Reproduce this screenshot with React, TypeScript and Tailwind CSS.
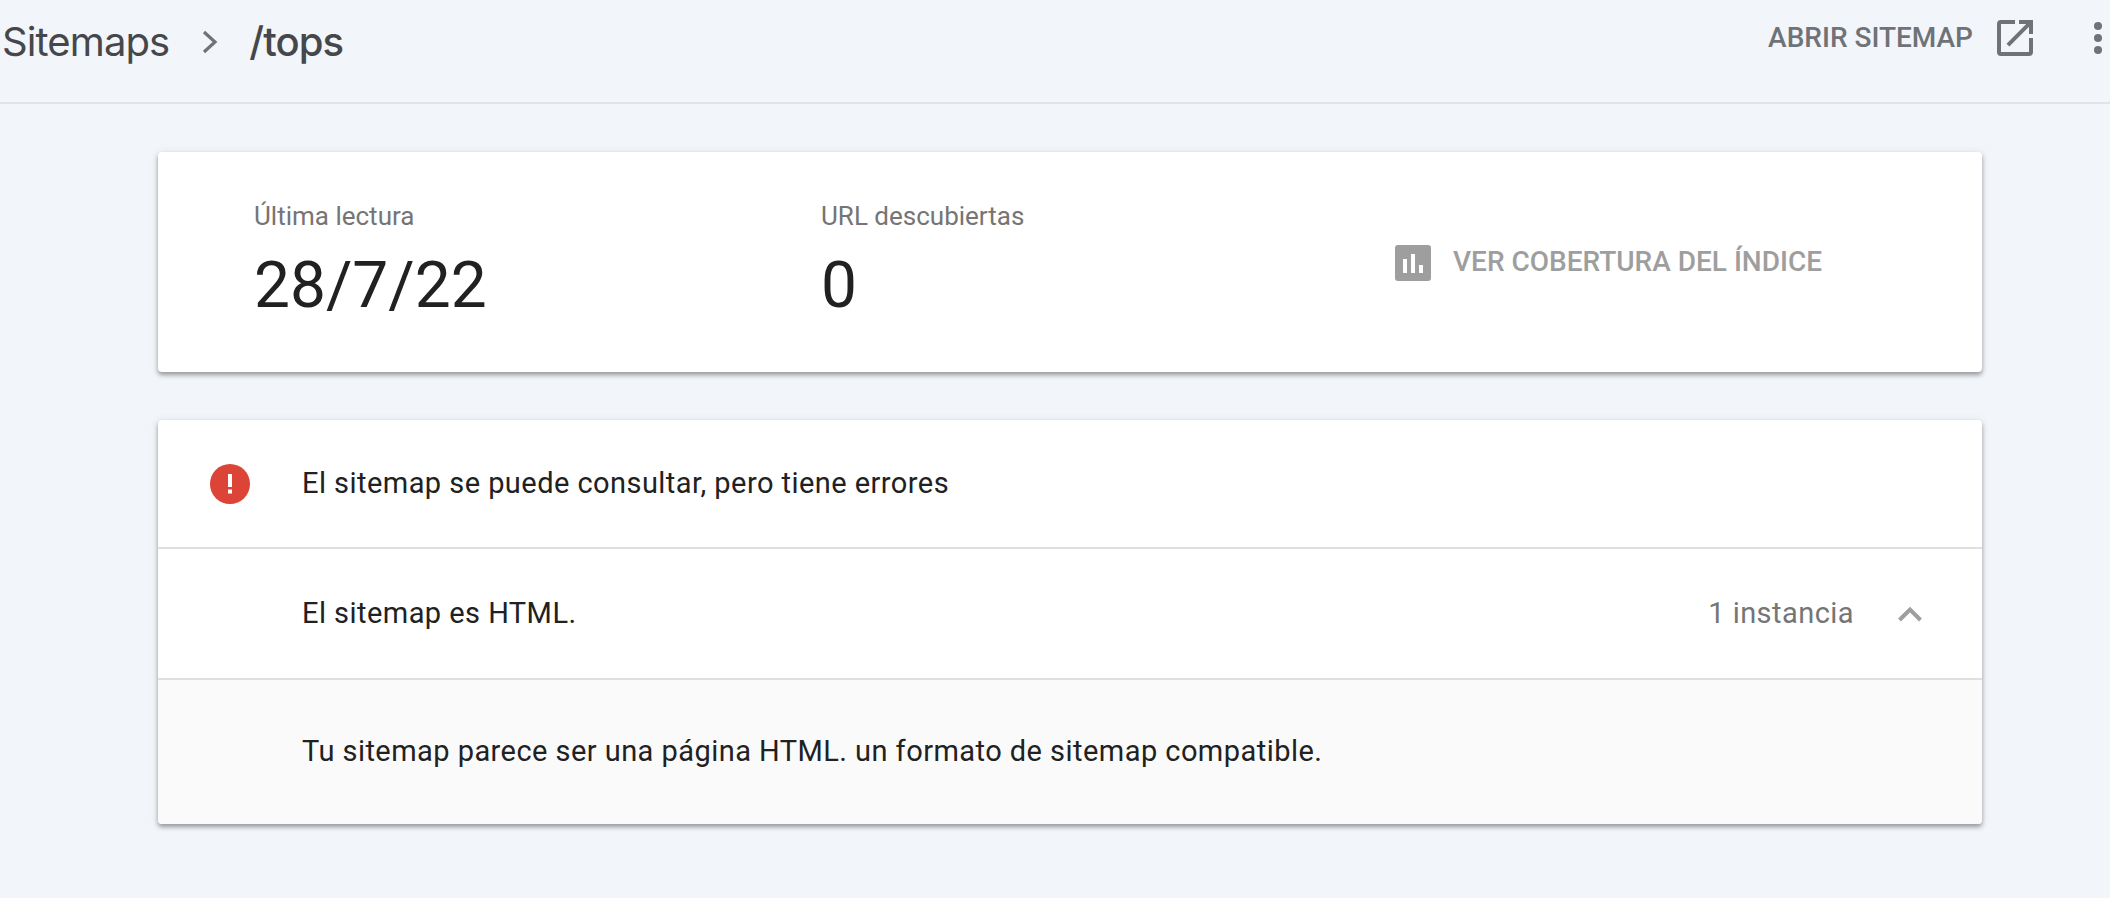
export default function App() {
  return (
    <div className="w-[2110px] h-[898px] bg-[#f2f5fa] overflow-hidden font-['Roboto',sans-serif]">
      <header className="h-[104px] border-b-2 border-[#e0e3e7] flex items-center pl-[2px] pb-[18px]">
        <span className="text-[40px] text-[#45474a] font-['Inter',sans-serif] tracking-[-0.9px]">Sitemaps</span>
        <svg className="w-[24px] h-[24px] ml-[29px]" viewBox="0 0 24 24" fill="none" stroke="#6f7276" strokeWidth="3.2"><path d="M6 2l11 10-11 10" /></svg>
        <span className="ml-[27px] text-[40px] font-medium text-[#45474a] font-['Inter',sans-serif] tracking-[-0.9px]">/tops</span>
        <div className="ml-auto flex items-center text-[#6f7276] -mt-[8px]">
          <span className="text-[28px] font-medium">ABRIR SITEMAP</span>
          <svg className="w-[48px] h-[48px] ml-[18px]" viewBox="0 0 24 24" fill="#6f7276"><path d="M19 19H5V5h7V3H5a2 2 0 0 0-2 2v14a2 2 0 0 0 2 2h14a2 2 0 0 0 2-2v-7h-2v7zM14 3v2h3.59l-9.83 9.83 1.41 1.41L19 6.41V10h2V3h-7z" /></svg>
          <svg className="w-[48px] h-[48px] ml-[35px] mr-[-12px]" viewBox="0 0 24 24" fill="#6f7276"><circle cx="12" cy="6" r="2" /><circle cx="12" cy="12" r="2" /><circle cx="12" cy="18" r="2" /></svg>
        </div>
      </header>
      <main className="mx-[158px] w-[1824px] mt-[48px] flex flex-col gap-[48px]">
        <section className="h-[220px] bg-white rounded-[4px] shadow-[0_3px_4px_rgba(60,64,67,0.45),0_1px_8px_rgba(60,64,67,0.12)] flex pl-[96px] pt-[46px]">
          <div className="w-[567px]">
            <div className="text-[26px] leading-[36px] text-[#757575]">Última lectura</div>
            <div className="text-[64px] leading-[78px] text-[#212121] mt-[13px]">28/7/22</div>
          </div>
          <div className="w-[574px]">
            <div className="text-[26px] leading-[36px] text-[#757575]">URL descubiertas</div>
            <div className="text-[64px] leading-[78px] text-[#212121] mt-[13px]">0</div>
          </div>
          <div className="flex items-start mt-[47px]">
            <div className="w-[36px] h-[36px] rounded-[3px] bg-[#9e9e9e] flex items-end justify-center gap-[4px] pb-[8px]">
              <span className="w-[4px] h-[14px] bg-white"></span>
              <span className="w-[4px] h-[19px] bg-white"></span>
              <span className="w-[4px] h-[8px] bg-white"></span>
            </div>
            <span className="ml-[22px] text-[28px] leading-[36px] -mt-[1px] font-medium text-[#9e9e9e]">VER COBERTURA DEL ÍNDICE</span>
          </div>
        </section>
        <section className="bg-white rounded-[4px] shadow-[0_3px_4px_rgba(60,64,67,0.45),0_1px_8px_rgba(60,64,67,0.12)] overflow-hidden">
          <div className="h-[129px] border-b-2 border-[#e0e0e0] flex items-center pl-[52px]">
            <svg className="w-[40px] h-[40px]" viewBox="0 0 40 40"><circle cx="20" cy="20" r="20" fill="#db4437" /><rect x="18" y="10" width="4" height="13" fill="#fff" /><rect x="18" y="25.5" width="4" height="4" fill="#fff" /></svg>
            <span className="ml-[52px] text-[29px] tracking-[0.45px] text-[#212121]">El sitemap se puede consultar, pero tiene errores</span>
          </div>
          <div className="h-[131px] border-b-2 border-[#e0e0e0] flex items-center pl-[144px] pr-[60px]">
            <span className="text-[29px] tracking-[0.45px] text-[#212121]">El sitemap es HTML.</span>
            <span className="ml-auto text-[29px] tracking-[0.45px] text-[#757575]">1 instancia</span>
            <svg className="w-[24px] h-[16px] ml-[44px]" viewBox="0 0 24 16" fill="none" stroke="#9e9e9e" strokeWidth="4"><path d="M1.5 14L12 3.5 22.5 14" /></svg>
          </div>
          <div className="h-[144px] bg-[#fafafa] flex items-center pl-[144px]">
            <span className="text-[29px] tracking-[0.45px] text-[#212121]">Tu sitemap parece ser una página HTML. un formato de sitemap compatible.</span>
          </div>
        </section>
      </main>
    </div>
  );
}
